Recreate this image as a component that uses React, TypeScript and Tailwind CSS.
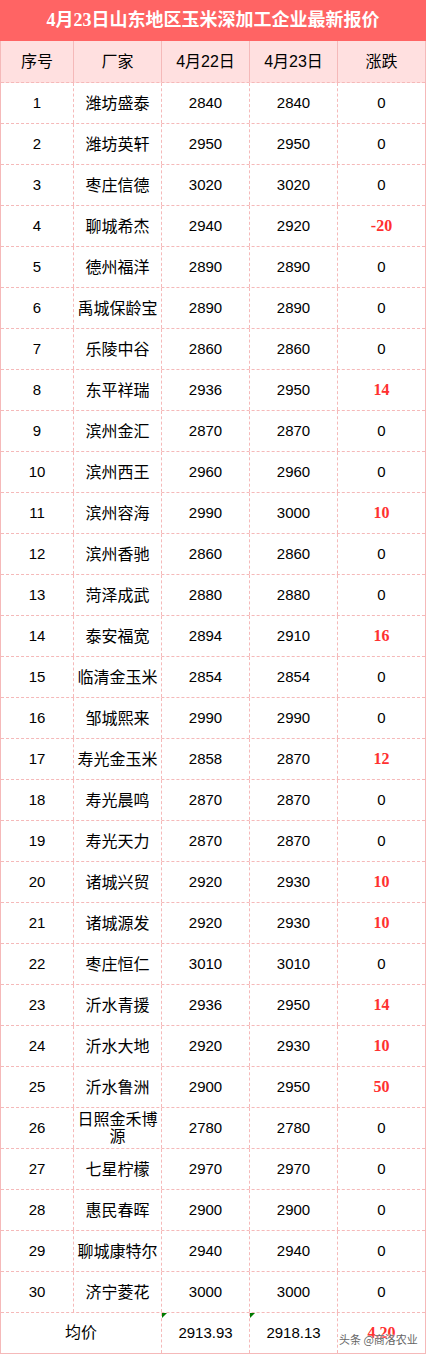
import React from "react";

type Row = [string, string, string, string, string];

const rows: Row[] = [
  ["1", "潍坊盛泰", "2840", "2840", "0"],
  ["2", "潍坊英轩", "2950", "2950", "0"],
  ["3", "枣庄信德", "3020", "3020", "0"],
  ["4", "聊城希杰", "2940", "2920", "-20"],
  ["5", "德州福洋", "2890", "2890", "0"],
  ["6", "禹城保龄宝", "2890", "2890", "0"],
  ["7", "乐陵中谷", "2860", "2860", "0"],
  ["8", "东平祥瑞", "2936", "2950", "14"],
  ["9", "滨州金汇", "2870", "2870", "0"],
  ["10", "滨州西王", "2960", "2960", "0"],
  ["11", "滨州容海", "2990", "3000", "10"],
  ["12", "滨州香驰", "2860", "2860", "0"],
  ["13", "菏泽成武", "2880", "2880", "0"],
  ["14", "泰安福宽", "2894", "2910", "16"],
  ["15", "临清金玉米", "2854", "2854", "0"],
  ["16", "邹城熙来", "2990", "2990", "0"],
  ["17", "寿光金玉米", "2858", "2870", "12"],
  ["18", "寿光晨鸣", "2870", "2870", "0"],
  ["19", "寿光天力", "2870", "2870", "0"],
  ["20", "诸城兴贸", "2920", "2930", "10"],
  ["21", "诸城源发", "2920", "2930", "10"],
  ["22", "枣庄恒仁", "3010", "3010", "0"],
  ["23", "沂水青援", "2936", "2950", "14"],
  ["24", "沂水大地", "2920", "2930", "10"],
  ["25", "沂水鲁洲", "2900", "2950", "50"],
  ["26", "日照金禾博源", "2780", "2780", "0"],
  ["27", "七星柠檬", "2970", "2970", "0"],
  ["28", "惠民春晖", "2900", "2900", "0"],
  ["29", "聊城康特尔", "2940", "2940", "0"],
  ["30", "济宁菱花", "3000", "3000", "0"],
];

const cell = "flex items-center justify-center text-center border-r border-dashed border-[#f5b9b9]";
const num = "text-[15px] font-['Liberation_Sans',sans-serif] text-black";
const red = "text-[16px] font-['Liberation_Serif',serif] font-bold text-[#ff3030]";

function GreenMark() {
  return (
    <span className="absolute top-0 left-0 w-0 h-0 border-t-[5px] border-r-[5px] border-t-[#007a00] border-r-transparent" />
  );
}

export default function App() {
  return (
    <div className="w-[426px] bg-white font-['Liberation_Sans','Noto_Sans_CJK_SC',sans-serif] text-black">
      <div className="h-[41px] bg-[#ff6464] flex items-center justify-center text-white font-bold text-[18px] font-['Liberation_Serif','Noto_Sans_CJK_SC',serif]">
        4月23日山东地区玉米深加工企业最新报价
      </div>
      <div className="border-x border-b border-solid border-[#f5b9b9]">
        <div className="grid grid-cols-[73px_88px_88px_88px_1fr] h-[42px] bg-[#ffe0e0] border-b border-dashed border-[#f5b9b9] text-[16px]">
          <div className="flex items-center justify-center border-r border-solid border-[#f5b9b9]">序号</div>
          <div className="flex items-center justify-center border-r border-solid border-[#f5b9b9]">厂家</div>
          <div className="flex items-center justify-center border-r border-solid border-[#f5b9b9]">4月22日</div>
          <div className="flex items-center justify-center border-r border-solid border-[#f5b9b9]">4月23日</div>
          <div className="flex items-center justify-center">涨跌</div>
        </div>
        {rows.map(([n, name, a, b, d]) => (
          <div
            key={n}
            className="grid grid-cols-[73px_88px_88px_88px_1fr] h-[41px] border-b border-dashed border-[#f5b9b9]"
          >
            <div className={`${cell} ${num}`}>{n}</div>
            <div className={`${cell} px-[2px] text-[16px] leading-[17px]`}>{name}</div>
            <div className={`${cell} ${num}`}>{a}</div>
            <div className={`${cell} ${num}`}>{b}</div>
            <div className={`flex items-center justify-center ${d === "0" ? num : red}`}>{d}</div>
          </div>
        ))}
        <div className="grid grid-cols-[161px_88px_88px_1fr] h-[40px]">
          <div className={`${cell} text-[16px]`}>均价</div>
          <div className={`${cell} ${num} relative`}>
            <GreenMark />
            2913.93
          </div>
          <div className={`${cell} ${num} relative`}>
            <GreenMark />
            2918.13
          </div>
          <div className={`relative flex items-center justify-center ${red}`}>
            4.20
            <span className="absolute left-[1px] top-[18px] whitespace-nowrap text-[11px] font-normal font-['Noto_Sans_CJK_SC',sans-serif] text-[#666] [text-shadow:0_0_2px_#fff,0_0_1px_#fff]">
              头条 @商洛农业
            </span>
          </div>
        </div>
      </div>
    </div>
  );
}
